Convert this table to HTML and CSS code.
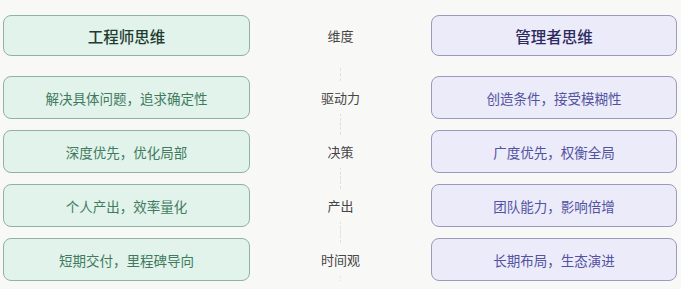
FILE: index.html
```html
<!DOCTYPE html>
<html lang="zh-CN">
<head>
    <meta charset="UTF-8">
    <meta name="viewport" content="width=device-width, initial-scale=1.0">
    <title>工程师思维 vs 管理者思维</title>
    <link rel="stylesheet" href="styles.css">
</head>
<body>
    <div class="compare">
        <div class="card eng head">工程师思维</div>
        <div class="dim head-dim"><span>维度</span></div>
        <div class="card mgr head">管理者思维</div>

        <div class="card eng">解决具体问题，追求确定性</div>
        <div class="dim"><span>驱动力</span></div>
        <div class="card mgr">创造条件，接受模糊性</div>

        <div class="card eng">深度优先，优化局部</div>
        <div class="dim"><span>决策</span></div>
        <div class="card mgr">广度优先，权衡全局</div>

        <div class="card eng">个人产出，效率量化</div>
        <div class="dim"><span>产出</span></div>
        <div class="card mgr">团队能力，影响倍增</div>

        <div class="card eng">短期交付，里程碑导向</div>
        <div class="dim"><span>时间观</span></div>
        <div class="card mgr">长期布局，生态演进</div>
    </div>
</body>
</html>
```

FILE: styles.css
```css
body {
    margin: 0;
    padding: 15px 4px 0 3px;
    background-color: #f8f8f6;
    font-family: "Noto Sans CJK SC", "Noto Sans", sans-serif;
    color: #444;
}
.compare {
    display: grid;
    grid-template-columns: 247px 181px 246px;
    grid-template-rows: 50px repeat(4, 43px);
    row-gap: 11px;
}
.card {
    display: flex;
    align-items: center;
    justify-content: center;
    border-radius: 8px;
    font-size: 13.5px;
    box-sizing: border-box;
}
.head,
.head-dim {
    align-self: start;
    height: 41px;
}
.card.head {
    font-size: 15.5px;
    font-weight: 500;
}
.eng {
    background-color: #e2f3eb;
    border: 1px solid #8fb3a3;
    color: #3f7b60;
}
.eng.head {
    color: #1f3c30;
}
.mgr {
    background-color: #ebebfa;
    border: 1px solid #9b99bd;
    color: #5352a0;
}
.mgr.head {
    color: #2c2a5f;
}
/* middle column, with a faint dashed guide running behind the labels */
.dim {
    display: flex;
    align-items: center;
    justify-content: center;
    font-size: 13px;
    color: #454545;
    margin: -8px 0;
    background-image: linear-gradient(#e0e0de 60%, transparent 40%);
    background-size: 1px 5px;
    background-repeat: repeat-y;
    background-position: 90px 0;
}
.dim span {
    background-color: #f8f8f6;
    padding: 7px 2px;
}
.head-dim {
    background-image: none;
    margin: 0;
}
```
